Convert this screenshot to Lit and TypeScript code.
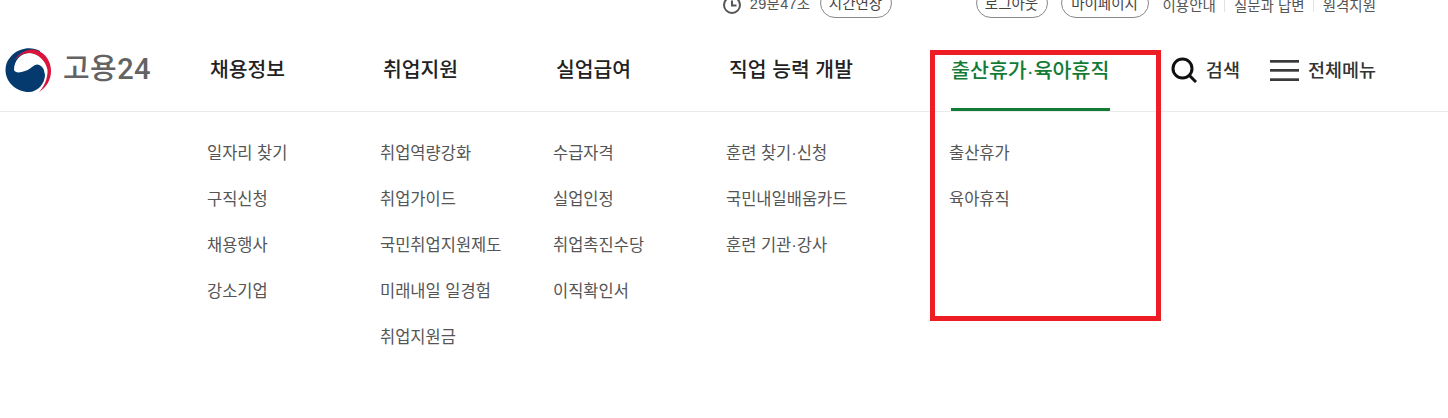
import { LitElement, html, css } from "lit";
import { customElement } from "lit/decorators.js";

const columns = [
  { title: "채용정보", items: ["일자리 찾기", "구직신청", "채용행사", "강소기업"] },
  { title: "취업지원", items: ["취업역량강화", "취업가이드", "국민취업지원제도", "미래내일 일경험", "취업지원금"] },
  { title: "실업급여", items: ["수급자격", "실업인정", "취업촉진수당", "이직확인서"] },
  { title: "직업 능력 개발", items: ["훈련 찾기·신청", "국민내일배움카드", "훈련 기관·강사"] },
  { title: "출산휴가·육아휴직", items: ["출산휴가", "육아휴직"], active: true },
];

@customElement("app-root")
export class AppRoot extends LitElement {
  static styles = css`
    :host {
      display: block;
      position: relative;
      width: 1448px;
      height: 418px;
      overflow: hidden;
      background: #fff;
      font-family: "Liberation Sans", "Noto Sans CJK KR", sans-serif;
      color: #222;
    }
    .util {
      height: 18px;
      display: flex;
      justify-content: flex-end;
      align-items: flex-end;
      padding-right: 72px;
      font-size: 14.5px;
      color: #555;
      line-height: 20px;
    }
    .timer { display: flex; align-items: center; margin-right: 84px; }
    .clock { width: 20px; height: 20px; margin-right: 8px; margin-top: 4px; flex: none; }
    .time { margin-right: 9px; margin-top: 2px; white-space: nowrap; letter-spacing: 0.3px; }
    .pill {
      height: 30px;
      box-sizing: border-box;
      border: 1px solid #888;
      border-radius: 15px;
      display: flex;
      align-items: center;
      justify-content: center;
      color: #444;
      flex: none;
      padding-top: 1px;
    }
    .p72 { width: 72px; }
    .p88 { width: 88px; margin-left: 13px; margin-right: 14px; }
    .links { display: flex; margin-bottom: 6px; }
    .links span { line-height: 12px; height: 12px; display: flex; align-items: center; padding: 0 8px 0 9px; border-left: 1px solid #e2e2e2; white-space: nowrap; }
    .links span:first-child { border-left: 0; padding: 0 8px 0 0; }
    .links span:last-child { padding-right: 0; }
    .main {
      height: 94px;
      box-sizing: border-box;
      border-bottom: 1px solid #ebebeb;
      display: flex;
      padding-left: 5px;
    }
    .logo { width: 202px; display: flex; align-items: center; padding-top: 10px; box-sizing: border-box; flex: none; }
    .logo svg { width: 47px; height: 47px; flex: none; }
    .word { width: 90px; margin-left: 11px; margin-bottom: 2px; font-family: Roboto, "Noto Sans CJK KR", sans-serif; font-size: 29px; font-weight: 500; color: #636363; letter-spacing: 0.4px; line-height: 40px; white-space: nowrap; }
    .grid-nav, .grid-sub { display: grid; grid-template-columns: 173px 173px 173px 223px auto; }
    .nav-item { padding-left: 3px; height: 93px; box-sizing: border-box; font-size: 20.4px; font-weight: 500; line-height: 29px; padding-top: 38px; color: #222; white-space: nowrap; }
    .nav-item.active { color: #127c37; position: relative; width: 161px; padding-left: 2px; font-size: 20.6px; }
    .nav-item.active i { position: absolute; left: 2px; right: 0; top: 90px; height: 3px; background: #127c37; }
    .tools { margin-left: auto; display: flex; align-items: center; padding-right: 72px; padding-top: 11px; font-size: 18.5px; font-weight: 500; color: #333; white-space: nowrap; }
    .tools svg { display: block; flex: none; }
    .tools span { margin-bottom: 3px; }
    .search { margin-right: 9px; }
    .menu { margin-left: 30px; margin-right: 9px; }
    .grid-sub { margin-left: 207px; padding-top: 29px; }
    .col { display: flex; flex-direction: column; gap: 22px; }
    .col div { font-size: 16.5px; line-height: 24px; color: #555; white-space: nowrap; }
    .mark { position: absolute; left: 930px; top: 50px; width: 231px; height: 271px; box-sizing: border-box; border: 5px solid #ee1c25; }
  `;

  render() {
    return html`
      <div class="util">
        <div class="timer">
          <svg class="clock" viewBox="0 0 20 20" fill="none" stroke="#555" stroke-width="2">
            <circle cx="10" cy="10" r="8" /><path d="M10 5.500V10.500H14.500" />
          </svg>
          <span class="time">29분47초</span>
          <div class="pill p72">시간연장</div>
        </div>
        <div class="pill p72">로그아웃</div>
        <div class="pill p88">마이페이지</div>
        <div class="links"><span>이용안내</span><span>질문과 답변</span><span>원격지원</span></div>
      </div>
      <div class="main">
        <div class="logo">
          <svg viewBox="0 0 47 47">
            <path d="M35 5C20 -3 .5 8 .5 24C.5 36 11 46 24 46C32 46 40 38 40 29L35 5Z" fill="#053a6e" />
            <path d="M9 24C9 14 16 7 25 7C35 7 43 16 43 26C43 33 40 40 33 45C38 40 41 33 40 27C39 21 34 17 30 19C26 21 24 24 20 25C15 27 10 27 9 24Z" fill="#fff" />
            <path d="M9 15C14 6 24 2 31 4C41 7 46 16 46 25C46 33 42 41 34 46C39 41 43 32 42.500 24C41 15 33 7 24 7C18 7 13 10 9 15Z" fill="#dc143c" />
          </svg>
          <span class="word">고용24</span>
        </div>
        <div class="grid-nav">
          ${columns.map(
            (c) => html`<div class="nav-item ${c.active ? "active" : ""}">${c.title}${c.active ? html`<i></i>` : ""}</div>`
          )}
        </div>
        <div class="tools">
          <svg class="search" width="26" height="26" viewBox="0 0 26 26" fill="none" stroke="#111" stroke-width="3">
            <circle cx="11.500" cy="11.500" r="9.500" /><path d="M18.500 18.500L25 25" />
          </svg>
          <span>검색</span>
          <svg class="menu" width="29" height="21" viewBox="0 0 29 21" fill="#3a3a3a">
            <rect y="0" width="29" height="2.700" /><rect y="9" width="29" height="2.700" /><rect y="18.300" width="29" height="2.700" />
          </svg>
          <span>전체메뉴</span>
        </div>
      </div>
      <div class="grid-sub">
        ${columns.map((c) => html`<div class="col">${c.items.map((i) => html`<div>${i}</div>`)}</div>`)}
      </div>
      <div class="mark"></div>
    `;
  }
}
